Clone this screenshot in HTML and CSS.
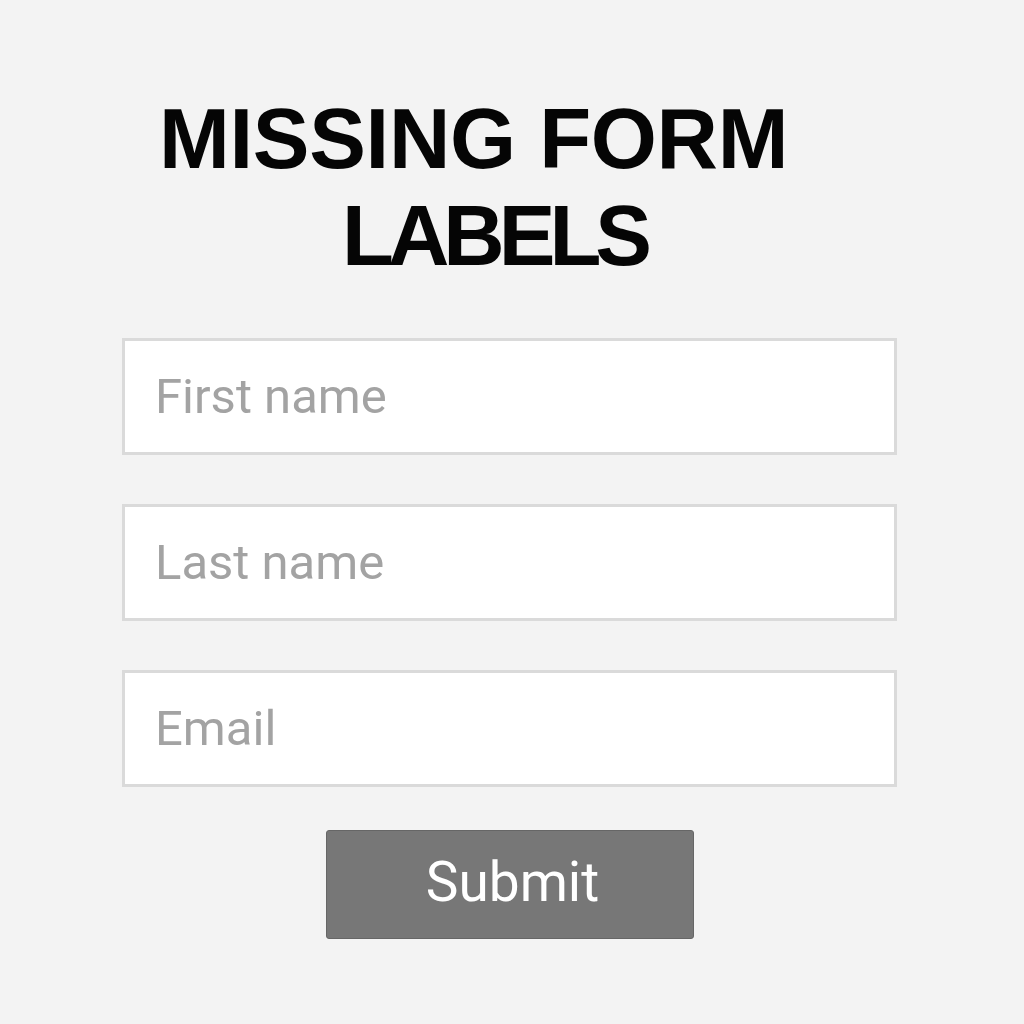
FILE: index.html
```html
<!DOCTYPE html>
<html>
<head>
<meta charset="utf-8">
<link rel="stylesheet" href="styles.css">
</head>
<body>
<main class="page">
  <h1 class="title">
    <span class="line line-1">MISSING FORM</span>
    <span class="line line-2">LABELS</span>
  </h1>
  <form class="form">
    <input class="field" type="text" placeholder="First name">
    <input class="field" type="text" placeholder="Last name">
    <input class="field" type="email" placeholder="Email">
    <button class="submit" type="button">Submit</button>
  </form>
</main>
</body>
</html>
```
FILE: styles.css
```css
html, body {
  margin: 0;
  padding: 0;
  background: #f3f3f3;
}
.page {
  width: 775px;
  margin-left: 122px;
  padding-top: 90px;
}
.title {
  margin: 0;
  display: flex;
  flex-direction: column;
  align-items: flex-start;
  font-family: "Liberation Sans", Arial, sans-serif;
  font-weight: 700;
  font-size: 85px;
  line-height: 97px;
  color: #050505;
  letter-spacing: -0.3px;
}
.line-1 {
  margin-left: 37px;
}
.line-2 {
  margin-left: 220px;
  letter-spacing: -6px;
}
.form {
  margin-top: 54px;
  display: flex;
  flex-direction: column;
  gap: 49px;
}
.field {
  box-sizing: border-box;
  width: 775px;
  height: 117px;
  margin: 0;
  border: 3px solid #dadada;
  background: #ffffff;
  padding: 0 0 0 30px;
  font-family: Roboto, "Noto Sans", sans-serif;
  font-size: 49px;
  color: #555;
  outline: none;
}
.field::placeholder {
  color: #a3a3a3;
}
.submit {
  align-self: center;
  margin-top: -6px;
  width: 368px;
  height: 109px;
  padding: 0 0 6px 6px;
  border: 1px solid #666;
  border-radius: 3px;
  background: #777777;
  color: #ffffff;
  font-family: Roboto, "Noto Sans", sans-serif;
  font-size: 55px;
  cursor: pointer;
}
```
